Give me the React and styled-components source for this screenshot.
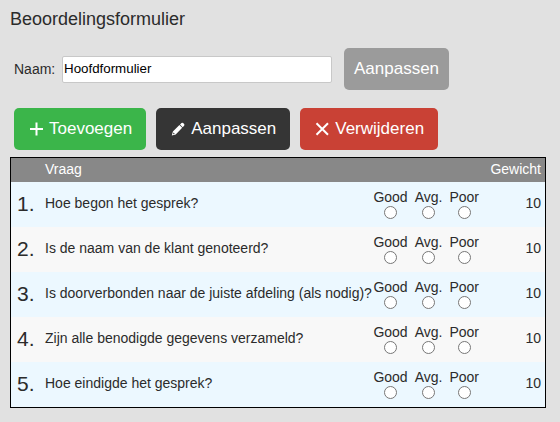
import React, { useState } from 'react';
import styled, { createGlobalStyle } from 'styled-components';

const GlobalStyle = createGlobalStyle`
    body {
        margin: 0;
        background-color: #e1e1e1;
        color: #2b2b2b;
        font-family: "Liberation Sans", Arial, Helvetica, sans-serif;
        font-size: 14px;
        line-height: 16px;
    }
`;

const Page = styled.main`
    padding: 8px 14px 14px 10px;
`;

const Title = styled.h1`
    margin: 0 0 18px;
    font-size: 18px;
    line-height: 22px;
    font-weight: normal;
`;

const NameForm = styled.form`
    display: flex;
    align-items: center;
    padding-left: 4px;
    margin-bottom: 18px;
`;

const NameLabel = styled.label`
    width: 48px;
`;

const NameInput = styled.input`
    box-sizing: border-box;
    flex: 0 1 270px;
    min-width: 0;
    height: 27px;
    margin-right: 12px;
    padding: 0 1px 1px;
    border: 1px solid #c8c8c8;
    border-radius: 2px;
    background-color: white;
    color: black;
    font-family: inherit;
`;

const Button = styled.button`
    display: flex;
    align-items: center;
    gap: 6px;
    height: 42px;
    padding: 0 14px 0 15px;
    border: none;
    border-radius: 5px;
    background-color: ${props => props.$color};
    color: white;
    font-family: inherit;
    font-size: 17px;
    cursor: pointer;
`;

const SaveButton = styled(Button)`
    padding: 0 10px;
    cursor: default;
`;

const Toolbar = styled.div`
    display: flex;
    gap: 10px;
    padding-left: 4px;
    margin-bottom: 7px;
`;

const Icon = styled.svg`
    width: 14px;
    height: 14px;
    flex: none;
    fill: none;
    stroke: white;
    stroke-width: 2;
`;

const Table = styled.table`
    width: 100%;
    border: 1px solid black;
    border-collapse: separate;
    border-spacing: 0;
`;

const HeadCell = styled.th`
    box-sizing: border-box;
    height: 24px;
    padding: 0 ${props => (props.$right ? '4px' : '0')} 2px 0;
    background-color: #888;
    color: white;
    font-weight: normal;
    text-align: ${props => (props.$right ? 'right' : 'left')};
`;

const Row = styled.tr`
    background-color: #f8f8f8;

    &:nth-child(odd) {
        background-color: #ecf8ff;
    }
`;

const Cell = styled.td`
    box-sizing: border-box;
    height: 45px;
    padding: 0 0 3px;
`;

const NumberCell = styled(Cell)`
    width: 34px;
    padding: 0 0 1px 6px;
    font-size: 21px;
`;

const RatingCell = styled(Cell)`
    width: 105px;
    padding: 0 0 1px;
`;

const WeightCell = styled(Cell)`
    width: 66px;
    padding-right: 4px;
    text-align: right;
`;

const Ratings = styled.div`
    display: flex;
    gap: 7px;
`;

const Rating = styled.label`
    display: flex;
    flex-direction: column;
    align-items: center;
    gap: 1px;
`;

const Radio = styled.input`
    width: 13px;
    height: 13px;
    margin: 0;
`;

const questions = [
    { id: 1, text: 'Hoe begon het gesprek?', weight: 10 },
    { id: 2, text: 'Is de naam van de klant genoteerd?', weight: 10 },
    { id: 3, text: 'Is doorverbonden naar de juiste afdeling (als nodig)?', weight: 10 },
    { id: 4, text: 'Zijn alle benodigde gegevens verzameld?', weight: 10 },
    { id: 5, text: 'Hoe eindigde het gesprek?', weight: 10 },
];

const ratings = ['Good', 'Avg.', 'Poor'];

const PlusIcon = () => (
    <Icon viewBox="0 0 14 14" aria-hidden="true">
        <path d="M7.5 .5v13M1 7h13" />
    </Icon>
);

const PencilIcon = () => (
    <Icon viewBox="0 0 14 14" aria-hidden="true">
        <path
            fill="white"
            stroke="none"
            fillRule="evenodd"
            d="M9 2.4 10.5 1Q11.3.4 12.1 1.1l1 1q.7.8 0 1.6L11.7 5.2zM8.4 3l2.8 2.8-6.5 6.6L.8 13.5l1.1-4zM2.5 10.4l-.5 1.8 1.8-.5z"
        />
    </Icon>
);

const CrossIcon = () => (
    <Icon viewBox="0 0 14 14" aria-hidden="true">
        <path d="M1.5 1.2 13 12.8M13 1.2 1.5 12.8" />
    </Icon>
);

const QuestionRow = ({ question }) => (
    <Row>
        <NumberCell>{question.id}.</NumberCell>
        <Cell>{question.text}</Cell>
        <RatingCell>
            <Ratings>
                {ratings.map(rating => (
                    <Rating key={rating}>
                        {rating}
                        <Radio type="radio" name={`question-${question.id}`} value={rating} />
                    </Rating>
                ))}
            </Ratings>
        </RatingCell>
        <WeightCell>{question.weight}</WeightCell>
    </Row>
);

const App = () => {
    const [name, setName] = useState('Hoofdformulier');

    return (
        <Page>
            <GlobalStyle />
            <Title>Beoordelingsformulier</Title>
            <NameForm onSubmit={e => e.preventDefault()}>
                <NameLabel htmlFor="form-name">Naam:</NameLabel>
                <NameInput
                    id="form-name"
                    type="text"
                    value={name}
                    onChange={e => setName(e.target.value)}
                />
                <SaveButton type="submit" $color="#9b9b9b">Aanpassen</SaveButton>
            </NameForm>
            <Toolbar>
                <Button type="button" $color="#3bb54a"><PlusIcon />Toevoegen</Button>
                <Button type="button" $color="#353535"><PencilIcon />Aanpassen</Button>
                <Button type="button" $color="#c94135"><CrossIcon />Verwijderen</Button>
            </Toolbar>
            <Table>
                <thead>
                    <tr>
                        <HeadCell />
                        <HeadCell>Vraag</HeadCell>
                        <HeadCell />
                        <HeadCell $right>Gewicht</HeadCell>
                    </tr>
                </thead>
                <tbody>
                    {questions.map(question => (
                        <QuestionRow key={question.id} question={question} />
                    ))}
                </tbody>
            </Table>
        </Page>
    );
};

export default App;
